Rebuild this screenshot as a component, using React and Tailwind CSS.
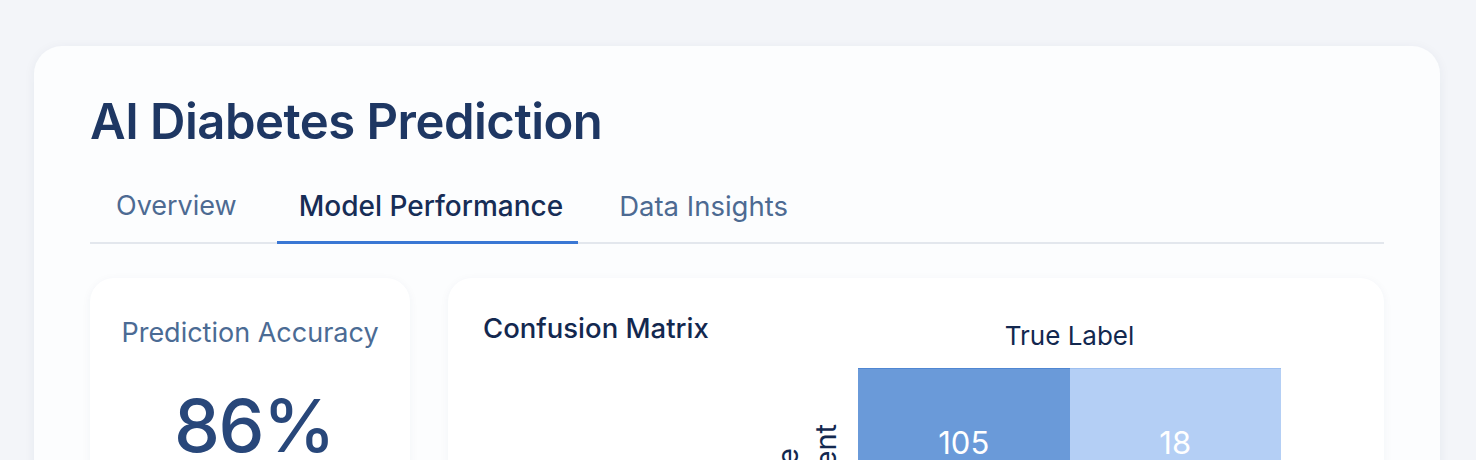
import React from 'react';

const tabs = [
  { label: 'Overview', cls: 'pl-[26px] pr-[21px] pb-[17px] text-[27px] leading-[36px] text-[#4d6a92]' },
  { label: 'Model Performance', cls: 'pl-[22px] pr-[15px] pb-[17px] text-[28px] leading-[36px] font-medium text-[#172d56] border-b-[3px] border-[#3a77d4] -mb-[2px]' },
  { label: 'Data Insights', cls: 'pl-[22px] pr-[22px] pb-[17px] text-[27.5px] leading-[36px] text-[#4d6a92]' },
];

function App() {
  return (
    <div className="h-[460px] overflow-hidden bg-[#f3f5f9] pt-[46px] pl-[34px] pr-[36px] font-['Inter',sans-serif]">
      {/* Main card */}
      <div className="rounded-[28px] bg-[#fcfdfe] shadow-[0_2px_12px_rgba(30,50,90,0.06)] px-[56px] pt-[44px] pb-10 min-h-[500px]">
        <h1 className="text-[49px] leading-[64px] font-semibold tracking-[-0.5px] text-[#1e3763]">
          AI Diabetes Prediction
        </h1>

        {/* Tabs */}
        <div className="mt-[34px] flex gap-[19px] border-b-2 border-[#e3e7ed]">
          {tabs.map((tab) => (
            <div key={tab.label} className={tab.cls}>
              {tab.label}
            </div>
          ))}
        </div>

        {/* Content */}
        <div className="mt-[34px] grid grid-cols-[320px_1fr] gap-[38px]">
          <div className="rounded-[24px] bg-white shadow-[0_2px_10px_rgba(30,50,90,0.05)] pt-[35px] h-[300px] flex flex-col items-center">
            <div className="text-[27px] leading-[40px] text-[#4b6b94]">Prediction Accuracy</div>
            <div className="mt-[28px] pl-[8px] text-[73px] leading-[90px] font-medium tracking-[-1.5px] text-[#28477a]">86%</div>
          </div>

          <div className="rounded-[24px] bg-white shadow-[0_2px_10px_rgba(30,50,90,0.05)] pl-[35px] pr-[103px] pt-[32px] h-[300px] flex">
            <div className="flex-1 text-[27.5px] leading-[36px] font-medium text-[#13284f]">Confusion Matrix</div>
            <div className="flex flex-col">
              <div className="pl-[87px] mt-[8px] text-center text-[26px] leading-[36px] text-[#13284f]">True Label</div>
              <div className="mt-[14px] flex">
                <div className="w-[87px] flex items-start gap-[4px] text-[29px] leading-[34px] text-[#13284f]">
                  <div className="mt-[80px] [writing-mode:vertical-rl] rotate-180">Disease</div>
                  <div className="mt-[56px] [writing-mode:vertical-rl] rotate-180">Present</div>
                </div>
                <div className="grid grid-cols-2 w-[423px]">
                  <div className="h-[150px] bg-[#6a9ad9] border-t border-[#4f86d2] flex items-center justify-center text-[31px] text-white">105</div>
                  <div className="h-[150px] bg-[#b4cff5] border-t border-[#9dbff0] flex items-center justify-center text-[31px] text-white">18</div>
                  <div className="h-[150px] bg-[#b4cff5] flex items-center justify-center text-[31px] text-white">14</div>
                  <div className="h-[150px] bg-[#6a9ad9] flex items-center justify-center text-[31px] text-white">63</div>
                </div>
              </div>
            </div>
          </div>
        </div>
      </div>
    </div>
  );
}

export default App;
